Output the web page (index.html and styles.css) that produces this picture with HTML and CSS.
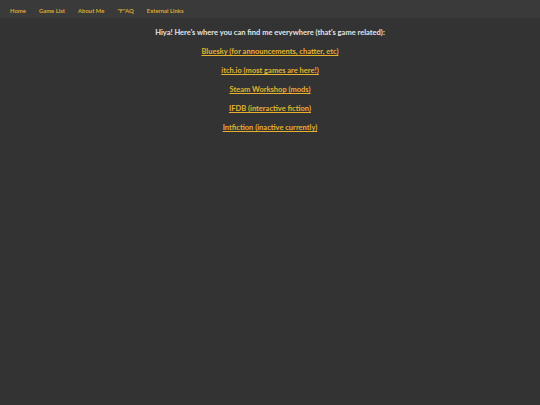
FILE: index.html
```html
<!DOCTYPE html>
<html>
<head>
<meta charset="utf-8">
<link rel="stylesheet" href="styles.css">
</head>
<body>
<nav class="nav">
  <a class="nav-link" href="#">Home</a>
  <a class="nav-link" href="#">Game List</a>
  <a class="nav-link" href="#">About Me</a>
  <a class="nav-link" href="#">"F"AQ</a>
  <a class="nav-link" href="#">External Links</a>
</nav>
<main class="content">
  <p class="intro">Hiya! Here's where you can find me everywhere (that's game related):</p>
  <p class="item"><a href="#">Bluesky (for announcements, chatter, etc)</a></p>
  <p class="item"><a href="#">itch.io (most games are here!)</a></p>
  <p class="item"><a href="#">Steam Workshop (mods)</a></p>
  <p class="item"><a href="#">IFDB (interactive fiction)</a></p>
  <p class="item"><a href="#">Intfiction (inactive currently)</a></p>
</main>
</body>
</html>
```
FILE: styles.css
```css
html, body {
  margin: 0;
  padding: 0;
  background: #333333;
  height: 100%;
}
body {
  font-family: Lato, "Open Sans", sans-serif;
  font-weight: bold;
}
.nav {
  display: flex;
  gap: 13px;
  padding: 0 10px;
  height: 18px;
  align-items: center;
  background: #3a3a3a;
}
.nav-link {
  color: #d9a933;
  text-decoration: none;
  font-size: 5.9px;
  padding-top: 3px;
}
.content {
  text-align: center;
  padding-top: 10px;
}
.content p {
  margin: 0;
  font-size: 7.5px;
  line-height: 10px;
}
.intro {
  color: #e4e4e4;
  margin-bottom: 9px !important;
}
.item {
  margin-bottom: 9px !important;
}
.item a {
  color: #e6b22e;
  text-decoration: underline;
}
```
